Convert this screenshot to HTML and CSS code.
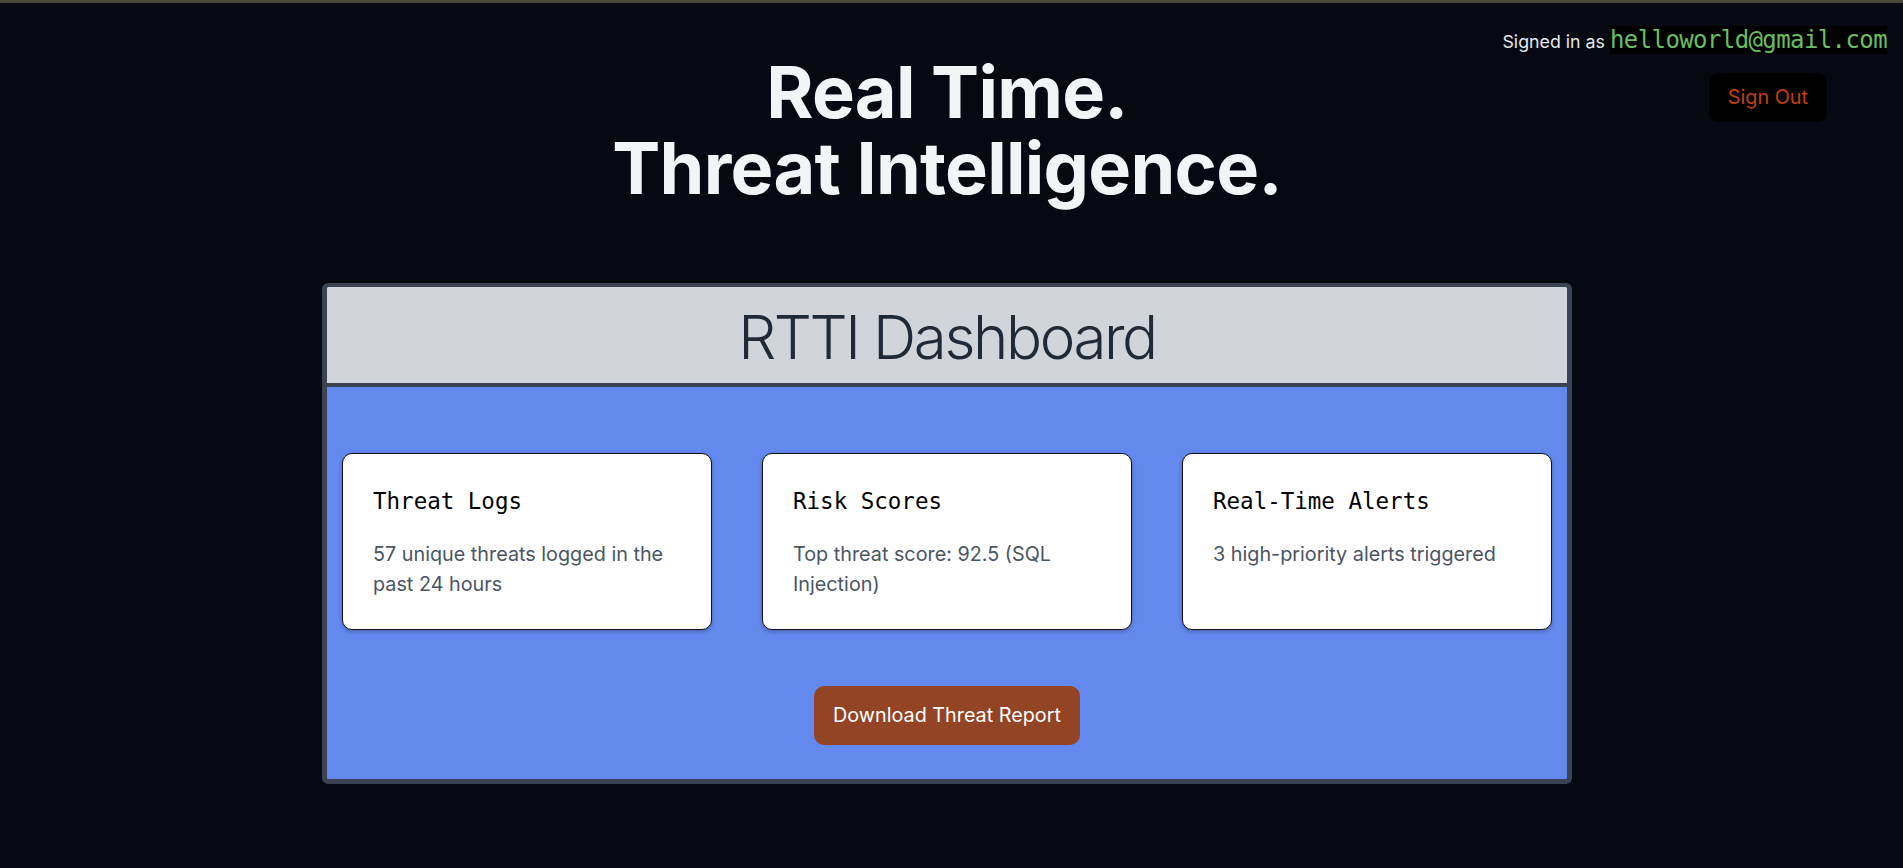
FILE: index.html
```html
<!DOCTYPE html>
<html lang="en">
<head>
<meta charset="utf-8">
<title>RTTI Dashboard</title>
<link rel="stylesheet" href="styles.css">
</head>
<body>
<div class="topline"></div>
<div class="account">
  <div class="signed">Signed in as <span class="email">helloworld@gmail.com</span></div>
  <button class="signout">Sign Out</button>
</div>
<main class="main">
  <h1 class="headline">Real Time.<br>Threat Intelligence.</h1>
  <section class="panel">
    <div class="panel-head">RTTI Dashboard</div>
    <div class="panel-body">
      <div class="cards">
        <div class="card">
          <h2 class="card-title">Threat Logs</h2>
          <p class="card-text">57 unique threats logged in the past 24 hours</p>
        </div>
        <div class="card">
          <h2 class="card-title">Risk Scores</h2>
          <p class="card-text">Top threat score: 92.5 (SQL Injection)</p>
        </div>
        <div class="card">
          <h2 class="card-title">Real-Time Alerts</h2>
          <p class="card-text">3 high-priority alerts triggered</p>
        </div>
      </div>
      <button class="download">Download Threat Report</button>
    </div>
  </section>
</main>
</body>
</html>
```
FILE: styles.css
```css
* { box-sizing: border-box; }
html, body { margin: 0; padding: 0; }
body {
  background: #060912;
  font-family: Inter, "Noto Sans", sans-serif;
  color: #f3f4f6;
  min-height: 868px;
  position: relative;
}
.topline { height: 3px; background: #4b4a37; }

.account {
  position: absolute;
  top: 26px;
  right: 16px;
  display: flex;
  flex-direction: column;
  align-items: flex-end;
}
.signed {
  font-size: 17.8px;
  line-height: 28px;
  color: #e5e7eb;
}
.email {
  font-family: "DejaVu Sans Mono", monospace;
  font-size: 24px;
  line-height: 28px;
  letter-spacing: -0.6px;
  color: #6abe5f;
  background: #000;
}
.signout {
  margin-top: 17px;
  margin-right: 60px;
  background: #000;
  color: #c2410c;
  border: 0;
  border-radius: 8px;
  font-family: Inter, sans-serif;
  font-size: 19.8px;
  line-height: 27px;
  padding: 11px 19px;
}

.main {
  padding-right: 9px;
  display: flex;
  flex-direction: column;
  align-items: center;
}
.headline {
  margin: 0;
  padding-top: 51px;
  font-size: 72px;
  line-height: 76px;
  font-weight: 700;
  letter-spacing: -0.01em;
  text-align: center;
  color: #f3f4f6;
}
.panel {
  margin-top: 77px;
  width: 1250px;
  border: 4px solid #3b4254;
  border-width: 4px 5px 5px 5px;
  border-radius: 6px;
  overflow: hidden;
}
.panel-head {
  background: #d1d5db;
  color: #1f2937;
  text-align: center;
  font-size: 60px;
  line-height: 60px;
  font-weight: 300;
  letter-spacing: -0.04em;
  padding: 20px 0 16px;
  border-bottom: 4px solid #3b4254;
}
.panel-body {
  background: #6389ef;
  padding: 66px 15px 34px;
  display: flex;
  flex-direction: column;
  align-items: center;
  gap: 56px;
}
.cards {
  display: flex;
  gap: 50px;
  align-self: stretch;
}
.card {
  flex: 1;
  background: #fff;
  border: 1px solid #111;
  border-radius: 10px;
  box-shadow: 0 2px 4px rgba(0,0,0,0.25);
  padding: 31px 30px 30px;
}
.card-title {
  margin: 0;
  font-family: "DejaVu Sans Mono", monospace;
  font-weight: 400;
  font-size: 22.5px;
  line-height: 32px;
  color: #000;
}
.card-text {
  margin: 22px 0 0;
  font-size: 19.8px;
  line-height: 30px;
  color: #4b5563;
}
.download {
  background: #934425;
  color: #fff;
  border: 0;
  border-radius: 10px;
  font-family: Inter, sans-serif;
  font-size: 19.8px;
  line-height: 27px;
  padding: 16px 19px;
}
```
